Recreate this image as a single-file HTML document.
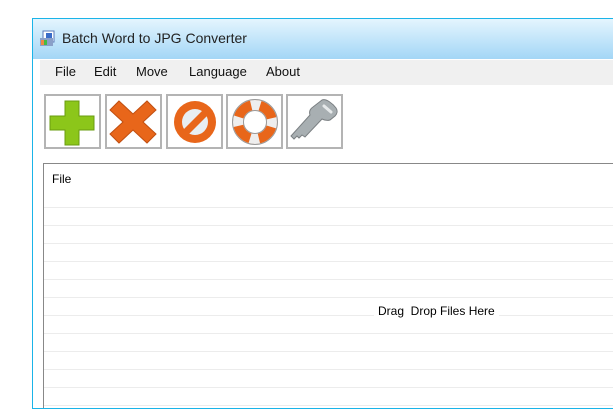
<!DOCTYPE html>
<html><head><style>
body{margin:0;width:613px;height:409px;background:#fff;position:relative;overflow:hidden;font-family:"Liberation Sans",sans-serif}
.win{position:absolute;left:32px;top:18px;width:600px;height:389px;border:1px solid #1ab4e8;background:#fff}
.title{position:absolute;left:0;top:0;right:0;height:40px;background:linear-gradient(#e4f5fe,#a3d6f6)}
.title span{position:absolute;left:29px;top:11px;font-size:14px;color:#222}
.menu{position:absolute;left:7px;top:41px;right:0;height:25px;background:#f0f0f0;font-size:13px;color:#111}
.menu span{position:absolute;top:4px}
.btn{position:absolute;top:75px;width:53px;height:51px;border:2px solid #b4b4b4;background:#fff}
.list{position:absolute;left:10px;top:144px;right:0;bottom:0;border-left:1px solid #888;border-top:1px solid #888}
.ln{position:absolute;left:0;right:0;height:1px;background:#ececec}
</style></head><body>
<div class="win">
<div class="title">
<svg style="position:absolute;left:6px;top:11px" width="17" height="17"><rect x="4" y="1" width="11" height="11" fill="#fff" stroke="#5a7ab8"/><rect x="7" y="3" width="6" height="5" fill="#3a6cc8"/><rect x="1" y="8" width="13" height="8" fill="#8aa0c8"/><rect x="2" y="10" width="3" height="5" fill="#e84"/><rect x="5" y="10" width="3" height="5" fill="#4b4"/></svg>
<span>Batch Word to JPG Converter</span></div>
<div class="menu"><span style="left:15px">File</span><span style="left:54px">Edit</span><span style="left:96px">Move</span><span style="left:149px">Language</span><span style="left:226px">About</span></div>
<div class="btn" style="left:11px"><svg width="53" height="51"><path d="M19 5h14v15h15v14H33v15H19V34H4V20h15z" fill="#8cc61a" stroke="#6a9c10"/></svg></div>
<div class="btn" style="left:72px"><svg width="53" height="51"><path d="M12 5l14 13 14-13 9 9-13 12 13 12-9 9-14-13-14 13-9-9 13-12L3 14z" fill="#e8661a" stroke="#c04e10"/></svg></div>
<div class="btn" style="left:133px"><svg width="53" height="51"><circle cx="27" cy="26" r="21" fill="#e8661a"/><circle cx="27" cy="26" r="13" fill="#e8eef2"/><path d="M14 35L36 13l5 5-22 22z" fill="#e8661a"/></svg></div>
<div class="btn" style="left:193px"><svg width="53" height="51"><circle cx="27" cy="26" r="17" fill="none" stroke="#e8661a" stroke-width="10"/><circle cx="27" cy="26" r="17" fill="none" stroke="#eee" stroke-width="10" stroke-dasharray="9 17.7" stroke-dashoffset="4"/><circle cx="27" cy="26" r="22.5" fill="none" stroke="#999" stroke-width="1"/><circle cx="27" cy="26" r="11.5" fill="none" stroke="#999" stroke-width="1"/></svg></div>
<div class="btn" style="left:253px"><svg width="53" height="51"><path d="M34 4c4-2 11 4 14 8 2 3 1 6-1 8l-5 4c-3 1-6 0-8-1L17 41l-3-2-3 3-2-2-3 3-3-3L22 19c-1-3 0-6 3-8z" fill="#a8afb2" stroke="#7a7f82"/><path d="M36 10l7 6" stroke="#e6e9ea" stroke-width="3" stroke-linecap="round"/></svg></div>
<div class="list">
<div style="position:absolute;left:8px;top:8px;font-size:12px">File</div>
<div class="ln" style="top:43px"></div><div class="ln" style="top:61px"></div><div class="ln" style="top:79px"></div><div class="ln" style="top:97px"></div><div class="ln" style="top:115px"></div><div class="ln" style="top:133px"></div><div class="ln" style="top:151px"></div><div class="ln" style="top:169px"></div><div class="ln" style="top:187px"></div><div class="ln" style="top:205px"></div><div class="ln" style="top:223px"></div><div class="ln" style="top:241px"></div>
<div style="position:absolute;left:330px;top:140px;padding:0 4px;background:#fff;font-size:12px">Drag&nbsp; Drop Files Here</div>
</div>
</div>
</body></html>
